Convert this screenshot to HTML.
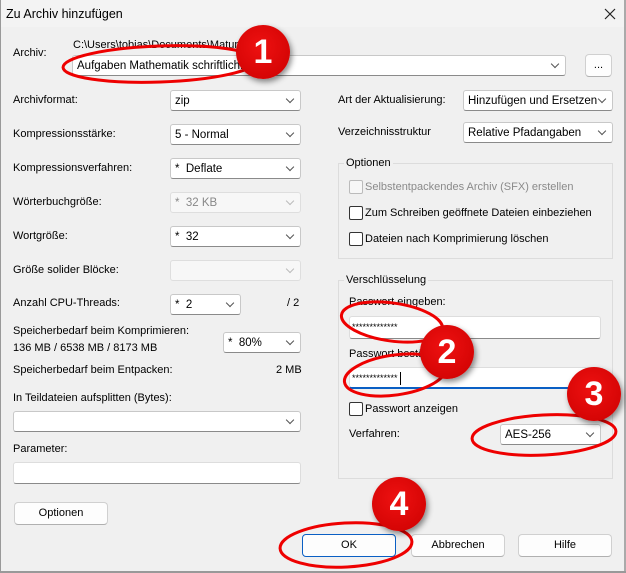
<!DOCTYPE html><html><head><meta charset="utf-8"><style>
body{margin:0;width:626px;height:573px;overflow:hidden;background:#f0f0f0;font-family:"Liberation Sans",sans-serif;font-size:11px;color:#000;position:relative}
.a{position:absolute;white-space:nowrap}
.l{position:absolute;white-space:nowrap;line-height:14px}
.cb{position:absolute;background:#fff;border:1px solid #c8c8c8;border-bottom-color:#8a8a8a;border-radius:3px;box-sizing:border-box;height:21px;padding:3px 4px;line-height:14px;font-size:11.5px}
.cb.d{background:#f7f7f7;border-color:#dedede;color:#888}
.cb:after{content:"";position:absolute;right:7px;top:5px;width:5px;height:5px;border-right:1px solid #555;border-bottom:1px solid #555;transform:rotate(45deg)}
.cb.d:after{border-color:#bbb}
.inp{position:absolute;background:#fff;border:1px solid #ddd;border-bottom-color:#8a8a8a;border-radius:3px;box-sizing:border-box}
.btn{position:absolute;background:#fdfdfd;border:1px solid #d0d0d0;border-bottom-color:#b0b0b0;border-radius:4px;box-sizing:border-box;height:23px;text-align:center;line-height:21px}
.grp{position:absolute;border:1px solid #dcdcdc;box-sizing:border-box}
.gl{position:absolute;background:#f0f0f0;padding:0 2px;top:-8px;left:5px;line-height:14px}
.ck{position:absolute;width:12px;height:12px;border:1px solid #333;border-radius:2px;background:#fff}
.ck.d{border-color:#bbb;background:#f7f7f7}
.dis{color:#8a8a8a}
.num{position:absolute;width:54px;height:54px;border-radius:50%;background:radial-gradient(circle at 45% 40%,#ee1111,#cc0000);color:#fff;font-weight:bold;font-size:34px;text-align:center;line-height:54px;box-shadow:2px 3px 6px rgba(0,0,0,.45)}
</style></head><body>
<div class="a" style="left:0;top:0;width:626px;height:27px;background:#f3f3f3"></div>
<div class="a" style="left:0;top:0;width:1px;height:573px;background:#999"></div>
<div class="a" style="left:624px;top:0;width:2px;height:573px;background:#aaa"></div>
<div class="a" style="left:0;top:571px;width:626px;height:2px;background:#999"></div>
<div class="l" style="left:6px;top:7px;font-size:12.5px">Zu Archiv hinzufügen</div>
<svg class="a" style="left:604px;top:8px" width="12" height="12"><path d="M1 1L11 11M11 1L1 11" stroke="#222" stroke-width="1.2"/></svg>

<div class="l" style="left:13px;top:46px">Archiv:</div>
<div class="l" style="left:73px;top:38px">C:\Users\tobias\Documents\Matur</div>
<div class="cb" style="left:72px;top:55px;width:494px">Aufgaben Mathematik schriftlich.zip</div>
<div class="btn" style="left:585px;top:54px;width:27px">...</div>

<div class="l" style="left:13px;top:93px">Archivformat:</div>
<div class="cb" style="left:170px;top:90px;width:131px">zip</div>
<div class="l" style="left:13px;top:127px">Kompressionsstärke:</div>
<div class="cb" style="left:170px;top:124px;width:131px">5 - Normal</div>
<div class="l" style="left:13px;top:161px">Kompressionsverfahren:</div>
<div class="cb" style="left:170px;top:158px;width:131px">*&nbsp; Deflate</div>
<div class="l" style="left:13px;top:195px">Wörterbuchgröße:</div>
<div class="cb d" style="left:170px;top:192px;width:131px">*&nbsp; 32 KB</div>
<div class="l" style="left:13px;top:229px">Wortgröße:</div>
<div class="cb" style="left:170px;top:226px;width:131px">*&nbsp; 32</div>
<div class="l" style="left:13px;top:263px">Größe solider Blöcke:</div>
<div class="cb d" style="left:170px;top:260px;width:131px"></div>
<div class="l" style="left:13px;top:296px">Anzahl CPU-Threads:</div>
<div class="cb" style="left:170px;top:294px;width:71px">*&nbsp; 2</div>
<div class="l" style="left:287px;top:296px">/ 2</div>
<div class="l" style="left:13px;top:324px">Speicherbedarf beim Komprimieren:</div>
<div class="l" style="left:13px;top:341px">136 MB / 6538 MB / 8173 MB</div>
<div class="cb" style="left:223px;top:332px;width:78px">*&nbsp; 80%</div>
<div class="l" style="left:13px;top:363px">Speicherbedarf beim Entpacken:</div>
<div class="l" style="left:276px;top:363px">2 MB</div>
<div class="l" style="left:13px;top:391px">In Teildateien aufsplitten (Bytes):</div>
<div class="cb" style="left:13px;top:411px;width:288px"></div>
<div class="l" style="left:13px;top:442px">Parameter:</div>
<div class="inp" style="left:13px;top:462px;width:288px;height:22px"></div>
<div class="btn" style="left:14px;top:502px;width:94px">Optionen</div>

<div class="l" style="left:338px;top:93px">Art der Aktualisierung:</div>
<div class="cb" style="left:463px;top:90px;width:150px">Hinzufügen und Ersetzen</div>
<div class="l" style="left:338px;top:125px">Verzeichnisstruktur</div>
<div class="cb" style="left:463px;top:122px;width:150px">Relative Pfadangaben</div>

<div class="grp" style="left:338px;top:163px;width:275px;height:96px"><div class="gl">Optionen</div></div>
<div class="ck d" style="left:349px;top:180px"></div><div class="l dis" style="left:365px;top:180px">Selbstentpackendes Archiv (SFX) erstellen</div>
<div class="ck" style="left:349px;top:206px"></div><div class="l" style="left:365px;top:206px">Zum Schreiben geöffnete Dateien einbeziehen</div>
<div class="ck" style="left:349px;top:232px"></div><div class="l" style="left:365px;top:232px">Dateien nach Komprimierung löschen</div>

<div class="grp" style="left:338px;top:280px;width:275px;height:199px"><div class="gl">Verschlüsselung</div></div>
<div class="l" style="left:349px;top:295px">Passwort eingeben:</div>
<div class="inp" style="left:349px;top:316px;width:252px;height:23px;padding:4px 2px;font-size:9px;line-height:12px">*************</div>
<div class="l" style="left:349px;top:347px">Passwort bestätigen:</div>
<div class="inp" style="left:349px;top:367px;width:252px;height:22px;border-bottom:2px solid #0a5fc4;padding:4px 2px;font-size:9px;line-height:12px">*************<span style="display:inline-block;width:1px;height:13px;background:#000;vertical-align:middle;margin-left:2px"></span></div>
<div class="ck" style="left:349px;top:402px"></div><div class="l" style="left:365px;top:402px">Passwort anzeigen</div>
<div class="l" style="left:349px;top:427px">Verfahren:</div>
<div class="cb" style="left:500px;top:424px;width:101px">AES-256</div>

<div class="btn" style="left:302px;top:534px;width:94px;border-color:#0a5fc4">OK</div>
<div class="btn" style="left:411px;top:534px;width:94px">Abbrechen</div>
<div class="btn" style="left:518px;top:534px;width:94px">Hilfe</div>

<svg class="a" style="left:0;top:0" width="626" height="573">
<g fill="none" stroke="#e00" stroke-width="3">
<ellipse cx="160" cy="64" rx="97" ry="18" transform="rotate(-2 160 64)"/>
<ellipse cx="392" cy="322" rx="51" ry="19" transform="rotate(8 392 322)"/>
<ellipse cx="395" cy="375" rx="51" ry="20" transform="rotate(-8 395 375)"/>
<ellipse cx="544" cy="435" rx="72" ry="20" transform="rotate(-3 544 435)"/>
<ellipse cx="346" cy="545" rx="66" ry="22" transform="rotate(-3 346 545)"/>
</g></svg>
<div class="num" style="left:236px;top:25px">1</div>
<div class="num" style="left:420px;top:325px">2</div>
<div class="num" style="left:567px;top:367px">3</div>
<div class="num" style="left:372px;top:477px">4</div>
</body></html>
